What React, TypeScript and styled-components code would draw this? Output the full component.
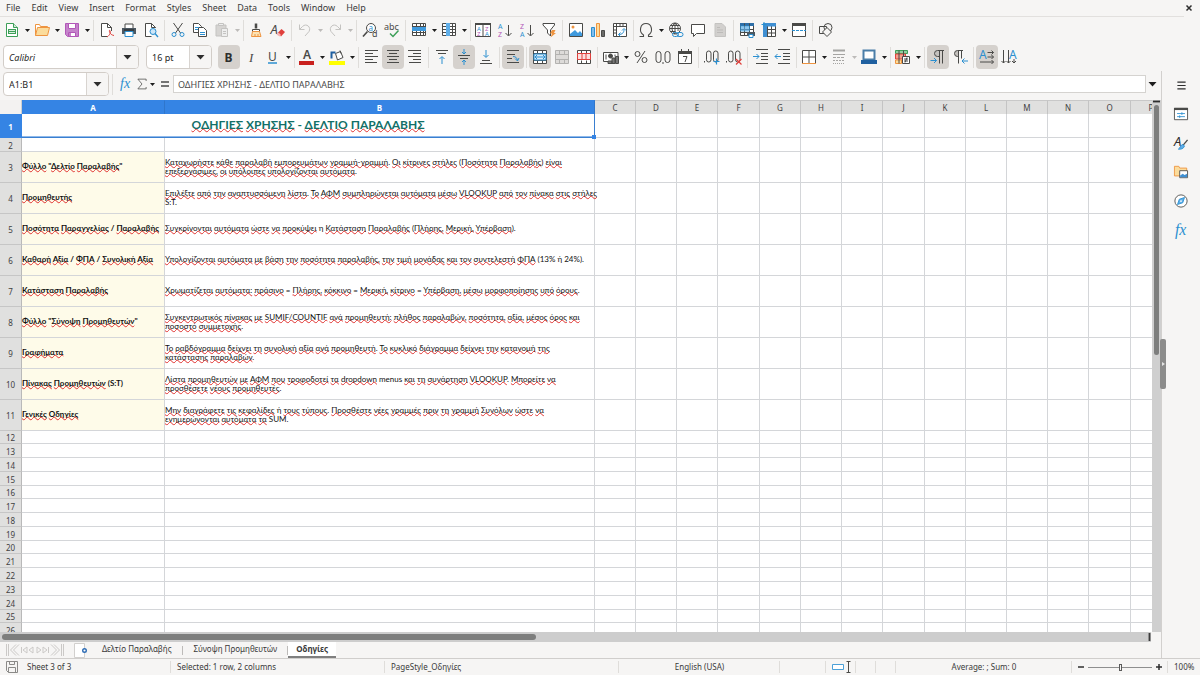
import React from 'react';
import styled, { createGlobalStyle, css } from 'styled-components';

const UI_FONT = '"Noto Sans", "Open Sans", sans-serif';
const CELL_FONT = 'Lato, "Noto Sans", sans-serif';

const INK = '#4a4a48';
const BLUE = '#2b8fd0';
const LIGHTBLUE = '#83beec';
const ORANGE = '#ee9440';
const GREEN = '#3d9f58';
const PURPLE = '#b257b8';
const RED = '#e0403c';
const PALE = '#c4c3c1';

const GlobalStyle = createGlobalStyle`
  * { box-sizing: border-box; }
  html, body { margin: 0; padding: 0; }
  body { font-family: ${UI_FONT}; background: #f6f5f4; color: #3a3a3a; }
  button, input { font-family: inherit; color: inherit; margin: 0; padding: 0; }
  svg { overflow: visible; }
`;

/* ---------- shell ---------- */

const Window = styled.div`
  display: flex;
  flex-direction: column;
  height: 100vh;
  overflow: hidden;
  background: #f6f5f4;
`;

const MenuBar = styled.nav`
  display: flex;
  align-items: center;
  flex: none;
  height: 17px;
  margin-right: 16px;
  padding-left: 6px;
  border-bottom: 1px solid #e2e0de;
`;

const MenuItem = styled.button`
  border: 0;
  background: none;
  font-size: 9px;
  line-height: 16px;
  margin-right: 11px;
`;

const CloseButton = styled.button`
  margin-left: auto;
  margin-right: -8px;
  display: flex;
  border: 0;
  background: none;
`;

const Toolbar = styled.div`
  display: flex;
  align-items: center;
  flex: none;
  height: 26px;
  padding-left: 1px;
`;

const FormatBar = styled(Toolbar)`
  height: 27px;
  padding-top: 1px;
  padding-left: 3px;
`;

const ToolButton = styled.button<{ $on?: boolean }>`
  display: flex;
  align-items: center;
  justify-content: center;
  flex: none;
  width: 22px;
  height: 24px;
  border: 0;
  border-radius: 4px;
  background: ${(p) => (p.$on ? '#d5d1cd' : 'transparent')};
`;

const WizardButton = styled(ToolButton)`
  width: 20px;
`;

const SumButton = styled(ToolButton)`
  width: 12px;
`;

const EqualsButton = styled(ToolButton)`
  width: 17px;
`;

const ArrowButton = styled.button<{ $faint?: boolean }>`
  display: flex;
  align-items: center;
  justify-content: center;
  flex: none;
  width: 8px;
  height: 24px;
  border: 0;
  background: none;
  color: ${(p) => (p.$faint ? '#bdbbb9' : '#1d1d1d')};
`;

const Divider = styled.span<{ $width: number }>`
  display: flex;
  flex: none;
  justify-content: center;
  width: ${(p) => p.$width}px;
  &::before {
    content: '';
    width: 1px;
    height: 21px;
    background: #dfddda;
  }
`;

const Combo = styled.div<{ $width: number; $gap?: number }>`
  display: flex;
  flex: none;
  width: ${(p) => p.$width}px;
  height: 24px;
  margin-right: ${(p) => p.$gap ?? 0}px;
  border: 1px solid #d2cdc8;
  border-radius: 4px;
  background: #fff;
  overflow: hidden;
`;

const ComboInput = styled.input<{ $italic?: boolean }>`
  flex: 1;
  min-width: 0;
  padding-left: 5px;
  border: 0;
  outline: 0;
  background: none;
  font-size: 9px;
  font-style: ${(p) => (p.$italic ? 'italic' : 'normal')};
  color: #1f1f1f;
`;

const ComboButton = styled.button`
  display: flex;
  align-items: center;
  justify-content: center;
  width: 22px;
  border: 0;
  border-left: 1px solid #d8d4d0;
  background: #f6f5f4;
  color: #2e2e2e;
`;

/* ---------- work area ---------- */

const WorkArea = styled.main`
  display: flex;
  flex: 1;
  min-height: 0;
`;

const Document = styled.section`
  display: flex;
  flex-direction: column;
  flex: 1;
  min-width: 0;
`;

const FormulaBar = styled.div`
  display: flex;
  align-items: center;
  flex: none;
  height: 30px;
  padding: 0 5px 2px 3px;
`;

const FormulaInput = styled.input`
  flex: 1;
  min-width: 0;
  height: 18px;
  margin: 0 2px 0 0;
  padding: 0 4px;
  border: 1px solid #d5d3d0;
  outline: 0;
  background: #fff;
  font-size: 9px;
  color: #4a4a4a;
`;

const GridRow = styled.div`
  display: flex;
  flex: 1;
  min-height: 0;
`;

const Viewport = styled.div`
  flex: 1;
  min-width: 0;
  overflow: hidden;
  background: #fff;
`;

const Sheet = styled.table`
  table-layout: fixed;
  width: 0;
  border-collapse: separate;
  border-spacing: 0;
`;

const SheetCol = styled.col<{ $width: number }>`
  width: ${(p) => p.$width}px;
`;

const ColHead = styled.th<{ $on?: boolean }>`
  height: 14px;
  padding: 0;
  border-right: 1px solid ${(p) => (p.$on ? '#2f76cc' : '#c4c4c4')};
  border-top: 1px solid ${(p) => (p.$on ? '#3584e4' : '#c8c8c8')};
  background: ${(p) => (p.$on ? '#3584e4' : '#e0e0df')};
  color: ${(p) => (p.$on ? '#fff' : '#3f3f3f')};
  font-size: 8px;
  line-height: 12px;
  font-weight: ${(p) => (p.$on ? 700 : 400)};
`;

const Corner = styled.td`
  padding: 0;
  border-right: 1px solid #d0d0d0;
  background: #f3f2f1;
`;

const RowHead = styled.th<{ $on?: boolean }>`
  padding: 1px 0 0;
  border-right: 1px solid ${(p) => (p.$on ? '#3584e4' : '#b9b9b9')};
  border-bottom: 1px solid ${(p) => (p.$on ? '#3584e4' : '#c6c6c6')};
  background: ${(p) => (p.$on ? '#3584e4' : '#e0e0df')};
  color: ${(p) => (p.$on ? '#fff' : '#3f3f3f')};
  font-size: 8px;
  line-height: 11px;
  font-weight: ${(p) => (p.$on ? 700 : 400)};
`;

const SheetRow = styled.tr<{ $height: number }>`
  height: ${(p) => p.$height}px;
`;

const Cell = styled.td`
  padding: 0;
  border-right: 1px solid #d4d6d9;
  border-bottom: 1px solid #d4d6d9;
  background: #fff;
`;

const cellText = css`
  padding: 0 0 1px;
  font-family: ${CELL_FONT};
  font-size: 8px;
  line-height: 9px;
  white-space: pre;
  color: #111;
`;

const LabelCell = styled(Cell)`
  ${cellText}
  background: #fefbe9;
  font-weight: 700;
`;

const TextCell = styled(Cell)`
  ${cellText}
`;

const TitleCell = styled(Cell)`
  position: relative;
  padding-bottom: 2px;
  border-right: 1px solid #3a7fd0;
  border-bottom: 1px solid #3a7fd0;
  box-shadow: inset 0 -1px 0 #8fb9ea;
  font-family: ${CELL_FONT};
  font-size: 12px;
  line-height: 15px;
  font-weight: 700;
  text-align: center;
  color: #137068;
`;

const FillHandle = styled.span`
  position: absolute;
  right: -2px;
  bottom: -2px;
  width: 4px;
  height: 4px;
  background: #3584e4;
`;

const Misspelt = styled.span`
  text-decoration: underline wavy #e0322f 1px;
  text-decoration-skip-ink: none;
  text-underline-offset: -1px;
`;

const VScroll = styled.div`
  display: flex;
  flex-direction: column;
  align-items: center;
  flex: none;
  width: 9px;
  background: #cfcfcf;
`;

const VGrip = styled.div`
  width: 7px;
  height: 3px;
  border-top: 1px solid #8f8f8f;
  border-bottom: 1px solid #8f8f8f;
  background: #2e2e2e;
`;

const VThumb = styled.div`
  width: 5px;
  height: 47%;
  margin-top: 2px;
  border-radius: 3px;
  background: #7d7e7d;
`;

const HScroll = styled.div`
  display: flex;
  align-items: center;
  flex: none;
  height: 10px;
  margin-right: 10px;
  padding-left: 2px;
  background: #cdcdcd;
`;

const HThumb = styled.div`
  width: 46.5%;
  height: 6px;
  border-radius: 3px;
  background: #7d7e7d;
`;

const SplitGrip = styled.div`
  width: 3px;
  height: 8px;
  margin-left: auto;
  border-left: 1px solid #8f8f8f;
  border-right: 1px solid #8f8f8f;
  background: #3c3c3c;
`;

const TabBar = styled.div`
  display: flex;
  align-items: stretch;
  flex: none;
  height: 16px;
`;

const TabNav = styled.div`
  display: flex;
  align-items: center;
  padding-left: 5px;
  width: 72px;
`;

const TabNavButton = styled.button`
  display: flex;
  justify-content: center;
  width: 15px;
  border: 0;
  background: none;
`;

const AddSheet = styled.button`
  display: flex;
  align-items: center;
  width: 19px;
  padding-left: 2px;
  border: 0;
  background: none;
`;

const Tab = styled.button<{ $on?: boolean }>`
  position: relative;
  height: 16px;
  padding: ${(p) => (p.$on ? '0 8px' : '0 11px')};
  border: 0;
  border-bottom: 2px solid ${(p) => (p.$on ? '#7f7f7f' : 'transparent')};
  background: ${(p) => (p.$on ? '#fff' : 'transparent')};
  font-size: 8px;
  line-height: 14px;
  font-weight: ${(p) => (p.$on ? 700 : 400)};
  &:not(:last-child)::after {
    content: '';
    position: absolute;
    right: 0;
    top: 4px;
    width: 1px;
    height: 9px;
    background: #bdbbb9;
  }
`;

const Sidebar = styled.aside`
  position: relative;
  display: flex;
  flex-direction: column;
  align-items: center;
  flex: none;
  width: 39px;
  padding-top: 2px;
  margin-top: 1px;
  border-left: 1px solid #d2d0ce;
`;

const SideButton = styled.button`
  display: flex;
  align-items: center;
  justify-content: center;
  width: 24px;
  height: 24px;
  margin-bottom: 5px;
  border: 0;
  background: none;
`;

const SideGrip = styled.button`
  position: absolute;
  left: -2px;
  top: 268px;
  width: 6px;
  height: 50px;
  display: flex;
  align-items: center;
  justify-content: center;
  border: 0;
  border-radius: 2px;
  background: #8c8c8b;
`;

/* ---------- status bar ---------- */

const StatusBar = styled.footer`
  display: grid;
  grid-template-columns: 171px 214px 234px 1fr 46px 30px 20px 20px 176px 96px 32px;
  flex: none;
  height: 17px;
  border-top: 1px solid #d0cecc;
`;

const StatusCell = styled.div<{ $center?: boolean }>`
  position: relative;
  display: flex;
  align-items: center;
  justify-content: ${(p) => (p.$center ? 'center' : 'flex-start')};
  padding-left: ${(p) => (p.$center ? 0 : 6)}px;
  font-size: 8px;
  line-height: 16px;
  white-space: nowrap;
  &:not(:last-child)::after {
    content: '';
    position: absolute;
    right: 0;
    top: 2px;
    width: 1px;
    height: 12px;
    background: #dfddda;
  }
`;

const SavedMark = styled.span`
  display: flex;
  margin-right: 9px;
`;

const ZoomButton = styled.button`
  display: flex;
  border: 0;
  background: none;
`;

const ZoomSlider = styled.input`
  flex: none;
  width: 64px;
  height: 12px;
  margin: 0 4px;
  appearance: none;
  background: linear-gradient(#8f8f8f, #8f8f8f) center / 100% 1px no-repeat;
  &::-webkit-slider-thumb {
    appearance: none;
    width: 3px;
    height: 7px;
    border: 1px solid #5a5a5a;
    background: #f6f5f4;
  }
`;

/* ---------- icons ---------- */

const Svg = ({ children, size = 16 }: { children: React.ReactNode; size?: number }) => (
  <svg width={size} height={size} viewBox="0 0 16 16" fill="none" stroke={INK} strokeWidth="1" aria-hidden="true">
    {children}
  </svg>
);

const Glyph = (p: React.SVGProps<SVGTextElement>) => (
  <text stroke="none" fontFamily={UI_FONT} fill={INK} {...p} />
);

const Caret = ({ big = false }: { big?: boolean }) =>
  big ? (
    <svg width="9" height="5" viewBox="0 0 9 5" aria-hidden="true"><path d="M.5 0h8L4.500 4.500z" fill="currentColor" /></svg>
  ) : (
    <svg width="5" height="3" viewBox="0 0 5 3" aria-hidden="true"><path d="M0 0h5L2.500 3z" fill="currentColor" /></svg>
  );

const lines = (rows: [number, number, number][], color = INK) =>
  rows.map(([x, y, w]) => <path key={`${x}-${y}`} d={`M${x} ${y}h${w}`} stroke={color} />);

const icons: Record<string, React.ReactNode> = {
  new: (
    <><path d="M2.500 1.500h7l4 4v9h-11z" stroke={GREEN} fill="#fff" /><path d="M9.500 1.500v4h4" stroke={GREEN} fill="#cfe9d6" />
      <path d="M4 7h8v5H4z" fill={GREEN} stroke="none" /><path d="M5 8.500h6M5 10.500h6" stroke="#d8f0de" /></>
  ),
  open: (
    <><path d="M1.500 13.500v-11h4l1 2h7v2" stroke={ORANGE} fill="#fff" /><path d="M1.500 13.500l2-8h12l-2 8z" stroke={ORANGE} fill="#fbdc9c" /></>
  ),
  save: (
    <><path d="M1.500 1.500h13v13h-11l-2-2z" stroke={PURPLE} fill="#c583cb" /><path d="M4.500 1.500h7v5h-7z" stroke={PURPLE} fill="#fff" />
      <path d="M4.500 10.500h7v4h-7z" stroke={PURPLE} fill="#fff" /><path d="M6 11v3" stroke={PURPLE} strokeWidth="1.500" /></>
  ),
  pdf: (
    <><path d="M12.500 9V5.500l-4-4h-6v13h6" fill="#fff" /><path d="M8.500 1.500v4h4" />
      <path d="M8 15c3-2 4-5 3-6.500S9.500 12.500 15 13.500" stroke={RED} /></>
  ),
  print: (
    <><path d="M4 6V2h8v4" fill="#fff" /><path d="M1 6h14v6H1z" fill="#4c5862" stroke="none" /><path d="M4 9.500h8v5H4z" fill="#fff" stroke={BLUE} />
      <path d="M3 8h10" stroke="#222" /></>
  ),
  preview: (
    <><path d="M12.500 6V5.500l-4-4h-6v13h6" fill="#fff" /><path d="M8.500 1.500v4h4" /><circle cx="10" cy="9.500" r="3" stroke={BLUE} fill="#cde6f8" />
      <path d="M12 11.500l3 3.500" stroke={BLUE} strokeWidth="1.300" /></>
  ),
  cut: (
    <><path d="M3.500 1l7 10M12.500 1l-7 10" /><circle cx="4" cy="12.500" r="2" stroke={BLUE} /><circle cx="12" cy="12.500" r="2" stroke={BLUE} /></>
  ),
  copy: (
    <><path d="M1.500 1.500h5l3 3v6h-8z" fill="#fff" /><path d="M6.500 5.500h5l3 3v6h-8z" fill="#fff" /><path d="M3 5.500h4M3 7.500h3M8 10.500h5M8 12.500h5" stroke={BLUE} /></>
  ),
  paste: (
    <><path d="M2 3h10v11H2z" fill="#d6d4d2" stroke={PALE} /><path d="M4.500 1.500h5v2h-5z" fill="#eee" stroke={PALE} /><path d="M7.500 6.500h6v8h-6z" fill="#eee" stroke={PALE} />
      <path d="M9 9.500h3M9 11.500h3" stroke={PALE} /></>
  ),
  clone: (
    <><path d="M8 1.500v5" strokeWidth="2.500" /><path d="M4.500 7.500h7v2h-7z" fill="#fff" /><path d="M3.500 14.500l1-5h7l1.500 5z" fill="#fce3b4" stroke={ORANGE} /><path d="M7 12v2.500M10 12v2.500" stroke={ORANGE} /></>
  ),
  clear: (
    <><Glyph x="0.500" y="12" fontSize="13" fontStyle="italic">A</Glyph><path d="M7.500 11l4-4 3.500 3-4 4.500z" fill={RED} stroke="none" /><path d="M6.500 12.500l2-2 2.500 2.500-1.500 1.500z" fill="#f6b3b1" stroke="none" /></>
  ),
  undo: <path d="M2.500 2.500v5h5M2.500 7.500l3-3c4-4 9 1 6.500 5l-4 4.500" stroke={PALE} />,
  redo: <path d="M13.500 2.500v5h-5M13.500 7.500l-3-3c-4-4-9 1-6.500 5l4 4.500" stroke={PALE} />,
  find: (
    <><circle cx="9" cy="6" r="4.500" fill="#fff" /><path d="M5.500 9.500l-4.500 5" strokeWidth="1.600" /><Glyph x="6.500" y="8.500" fontSize="8" fill={BLUE}>a</Glyph><Glyph x="10" y="15" fontSize="9">d</Glyph></>
  ),
  spell: (
    <><Glyph x="0" y="7.500" fontSize="9">abc</Glyph><path d="M6 11.500l3 3 5.500-6" stroke={GREEN} strokeWidth="1.500" /></>
  ),
  row: (
    <><path d="M1.500 1.500h13v12h-13z" fill="#fff" /><path d="M1.500 4.500h13M1.500 10.500h13M5.500 1.500v12M9.500 1.500v12M12.500 1.500v12" /><path d="M1 5h14v4H1z" fill="#3f9ade" stroke="none" /></>
  ),
  column: (
    <><path d="M1.500 1.500h13v12h-13z" fill="#fff" /><path d="M1.500 4.500h13M1.500 7.500h13M1.500 10.500h13M11.500 1.500v12" /><path d="M5 1h4v13H5z" fill="#5faee8" stroke="none" /></>
  ),
  sort: (
    <><path d="M.500 1.500h15v13H.500zM8 1.500v13" fill="#fff" /><path d="M0 1h16v2H0z" fill={INK} stroke="none" />
      <Glyph x="2" y="8.500" fontSize="6" fill={BLUE}>A</Glyph><Glyph x="2" y="14" fontSize="6" fill={PURPLE}>Z</Glyph>
      <Glyph x="10" y="8.500" fontSize="6" fill={PURPLE}>Z</Glyph><Glyph x="10" y="14" fontSize="6" fill={BLUE}>A</Glyph></>
  ),
  asc: (
    <><Glyph x="1" y="6.500" fontSize="7" fill={BLUE}>A</Glyph><Glyph x="1" y="15" fontSize="7" fill={PURPLE}>Z</Glyph><path d="M11.500 3v10.500M8.500 11l3 3 3-3" /></>
  ),
  desc: (
    <><Glyph x="1" y="6.500" fontSize="7" fill={PURPLE}>Z</Glyph><Glyph x="1" y="15" fontSize="7" fill={BLUE}>A</Glyph><path d="M11.500 3v10.500M8.500 11l3 3 3-3" /></>
  ),
  filter: (
    <><path d="M2 1.500h11.500v1.500L9.500 8v6l-3-3V8L2 3z" fill="#fff" /><path d="M11 8h3.500l-1.500 3h2l-5.500 4.500 1.500-4H9z" fill={ORANGE} stroke="none" /></>
  ),
  image: (
    <><path d="M1.500 1.500h13v13h-13z" fill="#fff" /><path d="M2 14v-2l5-4 3 3 2-2 2 2.500V14z" fill="#3f9ade" stroke="none" /><circle cx="5" cy="5" r="1.500" fill={ORANGE} stroke="none" /></>
  ),
  chart: (
    <><path d="M1.500 5.500h3v9h-3z" fill={LIGHTBLUE} stroke={BLUE} /><path d="M6.500 1.500h3v13h-3z" fill="#fbdc9c" stroke={ORANGE} /><path d="M11.500 8.500h3v6h-3z" fill="#6a6a68" /></>
  ),
  pivot: (
    <><path d="M1.500 1.500h13v13h-13z" fill="#fff" /><path d="M1.500 4.500h13M4.500 1.500v13M8 1.500v3M11 1.500v3M1.500 8h3M1.500 11h3" /><path d="M6.500 12.500c4 0 5.500-2 5.500-5M10 8.500l2-2 2 2M8.500 10.500l-2 2 2 2" stroke={BLUE} /></>
  ),
  omega: <path d="M1.500 14.500h4V13c-5-3-3.500-11.500 2.500-11.500S15.500 10 10.500 13v1.500h4" strokeWidth="1.100" />,
  link: (
    <><circle cx="7" cy="6.500" r="5.500" fill="#fff" /><path d="M1.500 6.500h11M2.500 3.500h9M2.500 9.500h5M7 1v11M7 1c-4 3-4 8 0 11M7 1c4 3 3 6 3 8" />
      <rect x="4.500" y="10.500" width="6" height="4" rx="2" stroke={BLUE} /><rect x="9" y="10.500" width="6" height="4" rx="2" stroke={BLUE} /></>
  ),
  comment: <path d="M1.500 2.500h13v9h-8l-3 3v-3h-2z" fill="#fff" />,
  header: <><path d="M3 1.500h7l3.500 3.500v9.500H3z" fill="#d2d0ce" stroke={PALE} /><path d="M5 8h6M5 10.500h6M5 5.500h3" stroke="#bdbbb9" /></>,
  printArea: (
    <><path d="M1.500 1.500h13v12h-13z" fill="#fff" /><path d="M1 1h14v3H1z" fill="#2f6fa8" stroke="none" /><path d="M1.500 7.500h13M1.500 10.500h13M5.500 1.500v12M10.500 1.500v12" /><path d="M1.500 4h9v5h-9z" fill="#5faee8" stroke={BLUE} opacity=".7" />
      <path d="M8 10h8v4H8z" fill="#4c5862" stroke="none" /><path d="M10 12.500h4v3h-4z" fill="#fff" stroke={BLUE} /></>
  ),
  freeze: (
    <><path d="M2.500 1.500h12v13h-12z" fill="#fff" /><path d="M2.500 7.500h12M2.500 11h12M6.500 4v11M10.500 4v11" /><path d="M2 1h13v3.500H2zM2 1h4v14H2z" fill="#3f8fd2" stroke="none" /><path d="M.500 2.500h5M3 0v5" stroke={BLUE} /></>
  ),
  split: (
    <><path d="M1.500 2.500h13v12h-13z" fill="#fff" /><path d="M1 1h14v3H1z" fill={INK} stroke="none" /><path d="M1 8.500h14" stroke={BLUE} strokeDasharray="3 1" /></>
  ),
  shapes: (
    <><path d="M1.500 4.500h7v7h-7z" /><circle cx="10" cy="5.500" r="4" /><path d="M9 5.500l4.500 4.500-4.500 4.500L4.500 10z" fill="#f6f5f4" /></>
  ),
  bold: <Glyph x="3.500" y="12.500" fontSize="12" fontWeight="700" fill="#2e2e2e">B</Glyph>,
  italic: <Glyph x="6" y="12.500" fontSize="13" fontStyle="italic" fontFamily='"Liberation Serif", serif'>I</Glyph>,
  underline: <><Glyph x="3" y="11.500" fontSize="12">U</Glyph><path d="M3 14h9" stroke={BLUE} strokeWidth="1.500" /></>,
  fontColor: <><Glyph x="4" y="10" fontSize="12" fontWeight="600">A</Glyph><path d="M0 12h15v4H0z" fill="#c9211e" stroke="none" /></>,
  highlight: (
    <><path d="M0 12h16v4H0z" fill="#ffff00" stroke="none" /><path d="M6.500 4.500l5-2 2.500 6-5.500 2.500z" fill="#fff" /><path d="M11 1.500l1 3" /><path d="M6.500 3.500H2.500v6" stroke="#1f5fa0" strokeWidth="2" /></>
  ),
  left: lines([[2, 1.5, 13], [2, 4.5, 8], [2, 7.5, 13], [2, 10.5, 8], [2, 13.5, 12]]),
  center: lines([[2, 1.5, 12], [4, 4.5, 8], [2, 7.5, 12], [4, 10.5, 8], [2, 13.5, 12]]),
  right: lines([[1, 1.5, 13], [6, 4.5, 8], [1, 7.5, 13], [6, 10.5, 8], [2, 13.5, 12]]),
  top: <>{lines([[2, 1.5, 12], [4, 4.5, 8]])}<path d="M8 15V8M5.500 10l2.500-2.500L10.500 10" stroke={BLUE} /></>,
  middle: <>{lines([[2, 6.5, 12], [4, 9.5, 8]])}<path d="M8 0v4.500M6 3l2 2 2-2M8 16v-4.500M6 13l2-2 2 2" stroke={BLUE} /></>,
  bottom: <>{lines([[4, 11.5, 8], [2, 14.5, 12]])}<path d="M8 1v7M5.500 6L8 8.500 10.500 6" stroke={BLUE} /></>,
  wrap: <>{lines([[2, 1.5, 12], [2, 5.5, 8], [2, 9.5, 5], [2, 13.5, 12]])}<path d="M8 7.500c3 0 4 1.500 4.500 4M10 9.500l2.500 2.500L14 9" stroke={BLUE} /></>,
  merge: (
    <><path d="M1.500 1.500h13v13h-13z" fill="#fff" /><path d="M1.500 4.500h13M1.500 11.500h13M5.500 1.500v3M10.500 1.500v3M5.500 11.500v3M10.500 11.500v3" />
      <path d="M2 5h12v6H2z" fill="#d5ebfa" stroke={BLUE} /><path d="M3 8h10M5 6L3 8l2 2M11 6l2 2-2 2" stroke={BLUE} /></>
  ),
  mergeOff: <><path d="M1.500 1.500h13v13h-13z" fill="#dddbd9" stroke="#b3b2b0" /><path d="M1.500 5.500h13M1.500 10.500h13M5.500 1.500v4M10.500 1.500v4M5.500 10.500v4M10.500 10.500v4" stroke="#b3b2b0" /></>,
  unmerge: (
    <><path d="M1.500 1.500h13v13h-13z" fill="#fff" /><path d="M5.500 1.500v3M10.500 1.500v3M5.500 11.500v3M10.500 11.500v3" /><path d="M1.500 4.500h13v6h-13zM6 4.500v6M10 4.500v6" stroke={RED} fill="#fbe0df" /></>
  ),
  currency: (
    <><path d="M15 8V3.500H.500v9H5" fill="#fff" /><circle cx="7.500" cy="7" r="2" fill={INK} /><path d="M3 5.500v5M12 5.500v2" /><path d="M5 12h4v2.500H5zM9 9h3v5.500H9zM12.500 7.500h3v7h-3z" fill="#777" /></>
  ),
  percent: <><circle cx="4.500" cy="5" r="2.500" /><circle cx="11.500" cy="11" r="2.500" /><path d="M12 2L4 14" /></>,
  number: <><rect x="1" y="2.500" width="5" height="11" rx="2.500" /><rect x="10" y="2.500" width="5" height="11" rx="2.500" /><path d="M8 13v2" /></>,
  date: (
    <><path d="M1.500 2.500h13v12h-13z" fill="#fff" /><path d="M1 2h14v3H1z" fill={INK} stroke="none" /><path d="M4.500 0v3M11.500 0v3" /><path d="M6 7.500h4l-2 5.500" /></>
  ),
  addDecimal: (
    <><path d="M.500 12v1.500" /><rect x="2.500" y="2" width="4.500" height="11" rx="2.200" /><rect x="9.500" y="2" width="4.500" height="11" rx="2.200" /><path d="M12.500 9.500v6M9.500 12.500h6" stroke={BLUE} strokeWidth="1.200" /></>
  ),
  delDecimal: (
    <><path d="M.500 12v1.500" /><rect x="2.500" y="2" width="4.500" height="11" rx="2.200" /><rect x="9.500" y="2" width="4.500" height="11" rx="2.200" /><path d="M10 10l5.500 5.500M15.500 10L10 15.500" stroke={RED} strokeWidth="1.200" /></>
  ),
  indent: <>{lines([[3, .5, 12], [8, 4.5, 7], [8, 7.500, 7], [8, 10.5, 7], [3, 14.5, 12]])}<path d="M0 7.500h6M3.500 5L6 7.500 3.500 10" stroke={BLUE} /></>,
  outdent: <>{lines([[3, .5, 12], [8, 4.5, 7], [8, 7.500, 7], [8, 10.5, 7], [3, 14.5, 12]])}<path d="M0 7.500h6M2.500 5L0 7.500 2.500 10" stroke={BLUE} /></>,
  borders: <><path d="M1.500 14.500v-13h13v13M8 1.500v13M1.500 8h13" fill="#fff" /><path d="M1 14.500h14" stroke={ORANGE} /></>,
  lineStyle: (
    <g stroke="#a5a4a2"><path d="M2 1.500h12" strokeWidth="2" /><path d="M2 5.500h12" /><path d="M2 8.500h12" strokeDasharray="3 1" /><path d="M2 11.500h12" strokeDasharray="2 1" /><path d="M2 14.500h12" strokeDasharray="1 1" /></g>
  ),
  lineColor: (
    <><path d="M2.500 1.500h11v9h-11z" stroke="#4b7ea8" strokeWidth="2" fill="#fff" /><path d="M0 11h16v4H0z" fill="#1f60a0" stroke="none" /></>
  ),
  conditional: (
    <><path d="M.500 1.500h12v3H.500z" fill="#8fd0a0" stroke={GREEN} /><path d="M.500 5h10v5h-10z" fill="#f2a08c" stroke={RED} /><path d="M.500 11h6v3.500h-6z" fill="#fbdc9c" stroke={ORANGE} /><path d="M4 1.500v13M8.500 1.500v6" />
      <path d="M7.500 7.500h7v7h-7z" fill="#fff" /><path d="M9 10h4M9 12h4M12 8.500l-2 5" /></>
  ),
  ltr: <><path d="M14 1.500H7.500a3 3 0 000 6H9.500V1.500" fill="#c4c1be" /><path d="M9.500 1.500v13M12.500 1.500v13" /><path d="M.500 11.500h6M4 9l2.500 2.500L4 14" stroke={BLUE} /></>,
  rtl: <><path d="M11 1.500H5.500a3 3 0 000 6H6.500V1.500" fill="#c4c1be" /><path d="M6.500 1.500v13M9.500 1.500v8" /><path d="M16 12h-6M12.500 9.500L10 12l2.500 2.500" stroke={BLUE} /></>,
  horizontal: (
    <><Glyph x="0" y="9.500" fontSize="12" fill={BLUE}>A</Glyph><path d="M8.500 3.500h6M12.500 1.500l2 2-2 2M8.500 8h6M12.500 6l2 2-2 2M1 13h13.500M12.500 11l2 2-2 2" /></>
  ),
  vertical: (
    <><Glyph x="8" y="9.500" fontSize="12" fill={BLUE}>A</Glyph><path d="M2.500 1v13M.500 12l2 2 2-2M7.500 1v13M5.500 12l2 2 2-2M13 10v4M11 12l2 2 2-2" /></>
  ),
  fx: <Glyph x="2" y="12" fontSize="14" fontStyle="italic" fontFamily='"Liberation Serif", serif' fill={BLUE}>fx</Glyph>,
  sum: <path d="M13.500 4V1.500h-11L8 8l-5.500 6.500h11V12" />,
  equals: <path d="M4 6h8M4 10h8" strokeWidth="1.600" />,
  menu: <path d="M2 3h12M2 8h12M2 13h12" strokeWidth="1.800" stroke="#2e2e2e" />,
  properties: (
    <><path d="M.500 1.500h15v13H.500z" fill="#fff" /><path d="M0 1h16v2.500H0z" fill={INK} stroke="none" /><path d="M3.500 7.500h9M3.500 11h9M9 6v3M6.500 9.500v3" stroke={BLUE} /></>
  ),
  styles: <><Glyph x="0" y="11" fontSize="15" fontStyle="italic" fill="#2e2e2e">A</Glyph><path d="M15.500 4.500L10 11" strokeWidth="1.500" /><path d="M10 9.500l2 2c-1 3-4 4-7 3.500 2-1 2-4 5-5.500z" fill="#5faee8" stroke={BLUE} /></>,
  gallery: (
    <><path d="M.500 12.500v-11h5l1 2h8v9z" fill="#fbdc9c" stroke={ORANGE} /><path d="M6.500 6.500h9v8h-9z" fill="#fff" /><path d="M7 14v-2l3-2 2 1.500 3-1.500v4z" fill="#3f8fd2" stroke="none" /></>
  ),
  navigator: <><circle cx="8" cy="8" r="7" fill="#fff" /><path d="M12 4l-2 6-6 2 2-6z" fill="#5faee8" stroke={BLUE} /><circle cx="8" cy="8" r="1" fill="#fff" stroke="none" /></>,
  functions: <Glyph x="1" y="14" fontSize="18" fontStyle="italic" fontFamily='"Liberation Serif", serif' fill={BLUE}>fx</Glyph>,
};

/* ---------- toolbar data ---------- */

type Tool = { icon: string; label: string; menu?: boolean; on?: boolean; faint?: boolean } | number;

const standardTools: Tool[] = [
  { icon: 'new', label: 'New', menu: true }, { icon: 'open', label: 'Open', menu: true }, { icon: 'save', label: 'Save', menu: true }, 5,
  { icon: 'pdf', label: 'Export as PDF' }, { icon: 'print', label: 'Print' }, { icon: 'preview', label: 'Print Preview' }, 5,
  { icon: 'cut', label: 'Cut' }, { icon: 'copy', label: 'Copy' }, { icon: 'paste', label: 'Paste', menu: true, faint: true }, 4,
  { icon: 'clone', label: 'Clone Formatting' }, { icon: 'clear', label: 'Clear Formatting' }, 5,
  { icon: 'undo', label: 'Undo', menu: true, faint: true }, { icon: 'redo', label: 'Redo', menu: true, faint: true }, 5,
  { icon: 'find', label: 'Find and Replace' }, { icon: 'spell', label: 'Spelling' }, 5,
  { icon: 'row', label: 'Row', menu: true }, { icon: 'column', label: 'Column', menu: true }, 4,
  { icon: 'sort', label: 'Sort' }, { icon: 'asc', label: 'Sort Ascending' }, { icon: 'desc', label: 'Sort Descending' }, { icon: 'filter', label: 'AutoFilter' }, 5,
  { icon: 'image', label: 'Image' }, { icon: 'chart', label: 'Chart' }, { icon: 'pivot', label: 'Pivot Table' }, 4,
  { icon: 'omega', label: 'Special Character', menu: true }, { icon: 'link', label: 'Hyperlink' }, { icon: 'comment', label: 'Comment' }, { icon: 'header', label: 'Headers and Footers' }, 5,
  { icon: 'printArea', label: 'Define Print Area' }, { icon: 'freeze', label: 'Freeze Rows and Columns', menu: true }, { icon: 'split', label: 'Split Window' }, 5,
  { icon: 'shapes', label: 'Draw Functions' },
];

const formatTools: Tool[] = [
  { icon: 'bold', label: 'Bold', on: true }, { icon: 'italic', label: 'Italic' }, { icon: 'underline', label: 'Underline', menu: true }, 4,
  { icon: 'fontColor', label: 'Font Color', menu: true }, { icon: 'highlight', label: 'Background Color', menu: true }, 4,
  { icon: 'left', label: 'Align Left' }, { icon: 'center', label: 'Center Horizontally', on: true }, { icon: 'right', label: 'Align Right' }, 5,
  { icon: 'top', label: 'Align Top' }, { icon: 'middle', label: 'Center Vertically', on: true }, { icon: 'bottom', label: 'Align Bottom' }, 5,
  { icon: 'wrap', label: 'Wrap Text', on: true }, 5,
  { icon: 'merge', label: 'Merge and Center Cells', on: true }, { icon: 'mergeOff', label: 'Merge Cells' }, { icon: 'unmerge', label: 'Unmerge Cells' }, 5,
  { icon: 'currency', label: 'Format as Currency', menu: true }, { icon: 'percent', label: 'Format as Percent' }, { icon: 'number', label: 'Format as Number' }, { icon: 'date', label: 'Format as Date' }, 5,
  { icon: 'addDecimal', label: 'Add Decimal Place' }, { icon: 'delDecimal', label: 'Delete Decimal Place' }, 5,
  { icon: 'indent', label: 'Increase Indent' }, { icon: 'outdent', label: 'Decrease Indent' }, 4,
  { icon: 'borders', label: 'Borders', menu: true }, { icon: 'lineStyle', label: 'Border Style', menu: true, faint: true }, { icon: 'lineColor', label: 'Border Color', menu: true }, 4,
  { icon: 'conditional', label: 'Conditional', menu: true }, 5,
  { icon: 'ltr', label: 'Left-To-Right', on: true }, { icon: 'rtl', label: 'Right-To-Left' }, 5,
  { icon: 'horizontal', label: 'Text direction from left to right', on: true }, { icon: 'vertical', label: 'Text direction from top to bottom' },
];

const Tools = ({ items }: { items: Tool[] }) => (
  <>
    {items.map((t, i) =>
      typeof t === 'number' ? (
        <Divider key={i} $width={t} />
      ) : (
        <React.Fragment key={i}>
          <ToolButton $on={t.on} aria-label={t.label}><Svg>{icons[t.icon]}</Svg></ToolButton>
          {t.menu && <ArrowButton $faint={t.faint} aria-label={`${t.label} options`}><Caret /></ArrowButton>}
        </React.Fragment>
      ),
    )}
  </>
);

/* ---------- sheet data ---------- */

const TITLE = 'ΟΔΗΓΙΕΣ ΧΡΗΣΗΣ - ΔΕΛΤΙΟ ΠΑΡΑΛΑΒΗΣ';

const entries: [string, string][] = [
  ['Φύλλο "Δελτίο Παραλαβής"', 'Καταχωρήστε κάθε παραλαβή εμπορευμάτων γραμμή-γραμμή. Οι κίτρινες στήλες (Ποσότητα Παραλαβής) είναι\nεπεξεργάσιμες, οι υπόλοιπες υπολογίζονται αυτόματα.'],
  ['Προμηθευτής', 'Επιλέξτε από την αναπτυσσόμενη λίστα. Το ΑΦΜ συμπληρώνεται αυτόματα μέσω VLOOKUP από τον πίνακα στις στήλες\nS:T.'],
  ['Ποσότητα Παραγγελίας / Παραλαβής', 'Συγκρίνονται αυτόματα ώστε να προκύψει η Κατάσταση Παραλαβής (Πλήρης, Μερική, Υπέρβαση).'],
  ['Καθαρή Αξία / ΦΠΑ / Συνολική Αξία', 'Υπολογίζονται αυτόματα με βάση την ποσότητα παραλαβής, την τιμή μονάδας και τον συντελεστή ΦΠΑ (13% ή 24%).'],
  ['Κατάσταση Παραλαβής', 'Χρωματίζεται αυτόματα: πράσινο = Πλήρης, κόκκινο = Μερική, κίτρινο = Υπέρβαση, μέσω μορφοποίησης υπό όρους.'],
  ['Φύλλο "Σύνοψη Προμηθευτών"', 'Συγκεντρωτικός πίνακας με SUMIF/COUNTIF ανά προμηθευτή: πλήθος παραλαβών, ποσότητα, αξία, μέσος όρος και\nποσοστό συμμετοχής.'],
  ['Γραφήματα', 'Το ραβδόγραμμα δείχνει τη συνολική αξία ανά προμηθευτή. Το κυκλικό διάγραμμα δείχνει την κατανομή της\nκατάστασης παραλαβών.'],
  ['Πίνακας Προμηθευτών (S:T)', 'Λίστα προμηθευτών με ΑΦΜ που τροφοδοτεί τα dropdown menus και τη συνάρτηση VLOOKUP. Μπορείτε να\nπροσθέσετε νέους προμηθευτές.'],
  ['Γενικές Οδηγίες', 'Μην διαγράφετε τις κεφαλίδες ή τους τύπους. Προσθέστε νέες γραμμές πριν τη γραμμή Συνόλων ώστε να\nενημερώνονται αυτόματα τα SUM.'],
];

const columns: [string, number][] = [
  ['A', 143], ['B', 430], ['C', 41], ['D', 41], ['E', 41], ['F', 42], ['G', 41], ['H', 41], ['I', 41], ['J', 42],
  ['K', 41], ['L', 41], ['M', 41], ['N', 41], ['O', 42], ['P', 41],
];

const emptyRows: [number, number][] = [
  [12, 13], [13, 14], [14, 14], [15, 14], [16, 13], [17, 14], [18, 14], [19, 14], [20, 13], [21, 14], [22, 14], [23, 14], [24, 14], [25, 13], [26, 14],
];

const knownWords = new Set(['menus', 'SUM.', 'S:T.', '(S:T)', '(13%', '24%).', 'ή', 'η', '/', '-', '=']);

const Spelled = ({ text }: { text: string }) => (
  <>
    {text.split(/(\s+)/).map((word, i) => {
      if (!word.trim() || knownWords.has(word)) return word;
      const [, before, core, after] = word.match(/^([("]*)(.*?)([)"]*\.?)$/)!;
      return <React.Fragment key={i}>{before}<Misspelt>{core}</Misspelt>{after}</React.Fragment>;
    })}
  </>
);

const Blanks = ({ from }: { from: number }) => (
  <>{columns.slice(from).map(([name]) => <Cell key={name} />)}</>
);

const sideItems: [string, string][] = [
  ['menu', 'Sidebar Settings'], ['properties', 'Properties'], ['styles', 'Styles'], ['gallery', 'Gallery'], ['navigator', 'Navigator'], ['functions', 'Functions'],
];

const navShapes: [string, string][] = [
  ['First sheet', 'M.500 0v12M2.500 0v12M10 .500L4.500 6l5.500 5.500M13 .500L7.500 6l5.500 5.500'],
  ['Previous sheet', 'M.500 3v6M6 3L2 6l4 3zM12 3L8 6l4 3z'],
  ['Next sheet', 'M1 3l4 3-4 3zM7 3l4 3-4 3zM12.500 3v6'],
  ['Last sheet', 'M12.500 0v12M10.500 0v12M3 .500L8.500 6 3 11.500M0 .500L5.500 6 0 11.500'],
];

export default function App() {
  return (
    <Window>
      <GlobalStyle />
      <MenuBar>
        {['File', 'Edit', 'View', 'Insert', 'Format', 'Styles', 'Sheet', 'Data', 'Tools', 'Window', 'Help'].map((m) => (
          <MenuItem key={m}>{m}</MenuItem>
        ))}
        <CloseButton aria-label="Close document">
          <svg width="6" height="6" viewBox="0 0 6 6" aria-hidden="true"><path d="M.500.500l5 5M5.500.500l-5 5" stroke="#2e2e2e" strokeWidth="1.500" /></svg>
        </CloseButton>
      </MenuBar>
      <Toolbar role="toolbar" aria-label="Standard"><Tools items={standardTools} /></Toolbar>
      <FormatBar role="toolbar" aria-label="Formatting">
        <Combo $width={136} $gap={7}>
          <ComboInput $italic aria-label="Font name" defaultValue="Calibri" />
          <ComboButton aria-label="Choose font"><Caret big /></ComboButton>
        </Combo>
        <Combo $width={66} $gap={6}>
          <ComboInput aria-label="Font size" defaultValue="16 pt" />
          <ComboButton aria-label="Choose size"><Caret big /></ComboButton>
        </Combo>
        <Tools items={formatTools} />
      </FormatBar>
      <WorkArea>
        <Document>
          <FormulaBar>
            <Combo $width={106}>
              <ComboInput aria-label="Name box" defaultValue="A1:B1" />
              <ComboButton aria-label="Choose range"><Caret big /></ComboButton>
            </Combo>
            <Divider $width={7} />
            <WizardButton aria-label="Function wizard"><Svg>{icons.fx}</Svg></WizardButton>
            <SumButton aria-label="Select function"><Svg size={12}>{icons.sum}</Svg></SumButton>
            <ArrowButton aria-label="Function options"><Caret /></ArrowButton>
            <EqualsButton aria-label="Formula"><Svg>{icons.equals}</Svg></EqualsButton>
            <FormulaInput aria-label="Formula" defaultValue={TITLE} />
            <ArrowButton aria-label="Expand formula bar"><Caret big /></ArrowButton>
          </FormulaBar>
          <GridRow>
            <Viewport>
              <Sheet>
                <colgroup>
                  <SheetCol $width={22} />
                  {columns.map(([name, w]) => <SheetCol key={name} $width={w} />)}
                </colgroup>
                <thead>
                  <tr>
                    <Corner />
                    {columns.map(([name], i) => <ColHead key={name} scope="col" $on={i < 2}>{name}</ColHead>)}
                  </tr>
                </thead>
                <tbody>
                  <SheetRow $height={24}>
                    <RowHead scope="row" $on>1</RowHead>
                    <TitleCell colSpan={2}><Spelled text={TITLE} /><FillHandle /></TitleCell>
                    <Blanks from={2} />
                  </SheetRow>
                  <SheetRow $height={14}>
                    <RowHead scope="row">2</RowHead>
                    <Blanks from={0} />
                  </SheetRow>
                  {entries.map(([label, text], i) => (
                    <SheetRow key={label} $height={31}>
                      <RowHead scope="row">{i + 3}</RowHead>
                      <LabelCell><Spelled text={label} /></LabelCell>
                      <TextCell><Spelled text={text} /></TextCell>
                      <Blanks from={2} />
                    </SheetRow>
                  ))}
                  {emptyRows.map(([n, h]) => (
                    <SheetRow key={n} $height={h}>
                      <RowHead scope="row">{n}</RowHead>
                      <Blanks from={0} />
                    </SheetRow>
                  ))}
                </tbody>
              </Sheet>
            </Viewport>
            <VScroll><VGrip /><VThumb /></VScroll>
          </GridRow>
          <HScroll><HThumb /><SplitGrip /></HScroll>
          <TabBar>
            <TabNav>
              {navShapes.map(([label, d]) => (
                <TabNavButton key={label} aria-label={label}>
                  <svg width="13" height="12" viewBox="0 0 13 12" fill="none" stroke="#cbc9c7" aria-hidden="true"><path d={d} /></svg>
                </TabNavButton>
              ))}
            </TabNav>
            <AddSheet aria-label="Add sheet">
              <svg width="14" height="15" viewBox="0 0 14 15" aria-hidden="true">
                <path d="M.500.500h10v14h-10z" fill="#fff" stroke="#d2d0ce" /><circle cx="10.500" cy="7.500" r="1.800" fill="#fff" stroke="#2f6db5" strokeWidth="1.400" />
              </svg>
            </AddSheet>
            <Tab>Δελτίο Παραλαβής</Tab>
            <Tab>Σύνοψη Προμηθευτών</Tab>
            <Tab $on>Οδηγίες</Tab>
          </TabBar>
        </Document>
        <Sidebar>
          {sideItems.map(([icon, label]) => (
            <SideButton key={icon} aria-label={label}><Svg size={icon === 'menu' ? 11 : 14}>{icons[icon]}</Svg></SideButton>
          ))}
          <SideGrip aria-label="Hide sidebar">
            <svg width="3" height="4" viewBox="0 0 3 4" aria-hidden="true"><path d="M0 0l3 2-3 2z" fill="#e4e4e4" /></svg>
          </SideGrip>
        </Sidebar>
      </WorkArea>
      <StatusBar>
        <StatusCell>
          <SavedMark>
            <svg width="12" height="12" viewBox="0 0 12 12" fill="none" stroke="#8b8a88" aria-hidden="true"><path d="M.500.500h11v11h-9l-2-2zM3.500.500h5v3h-5zM2.500 11.500v-5h7v5" /></svg>
          </SavedMark>
          Sheet 3 of 3
        </StatusCell>
        <StatusCell>Selected: 1 row, 2 columns</StatusCell>
        <StatusCell>PageStyle_Οδηγίες</StatusCell>
        <StatusCell $center>English (USA)</StatusCell>
        <StatusCell />
        <StatusCell>
          <svg width="20" height="12" viewBox="0 0 20 12" fill="none" aria-hidden="true"><path d="M.500 3.500h11v5H.500z" stroke="#4ba0d8" fill="#fff" /><path d="M14.500.500h4M16.500.500v11M14.500 11.500h4" stroke={INK} /></svg>
        </StatusCell>
        <StatusCell />
        <StatusCell />
        <StatusCell $center>Average: ; Sum: 0</StatusCell>
        <StatusCell>
          <ZoomButton aria-label="Zoom out"><svg width="6" height="6" viewBox="0 0 6 6" aria-hidden="true"><path d="M0 3h6" stroke="#2e2e2e" strokeWidth="1.500" /></svg></ZoomButton>
          <ZoomSlider type="range" aria-label="Zoom" defaultValue={50} />
          <ZoomButton aria-label="Zoom in"><svg width="6" height="6" viewBox="0 0 6 6" aria-hidden="true"><path d="M0 3h6M3 0v6" stroke="#2e2e2e" strokeWidth="1.500" /></svg></ZoomButton>
        </StatusCell>
        <StatusCell>100%</StatusCell>
      </StatusBar>
    </Window>
  );
}
